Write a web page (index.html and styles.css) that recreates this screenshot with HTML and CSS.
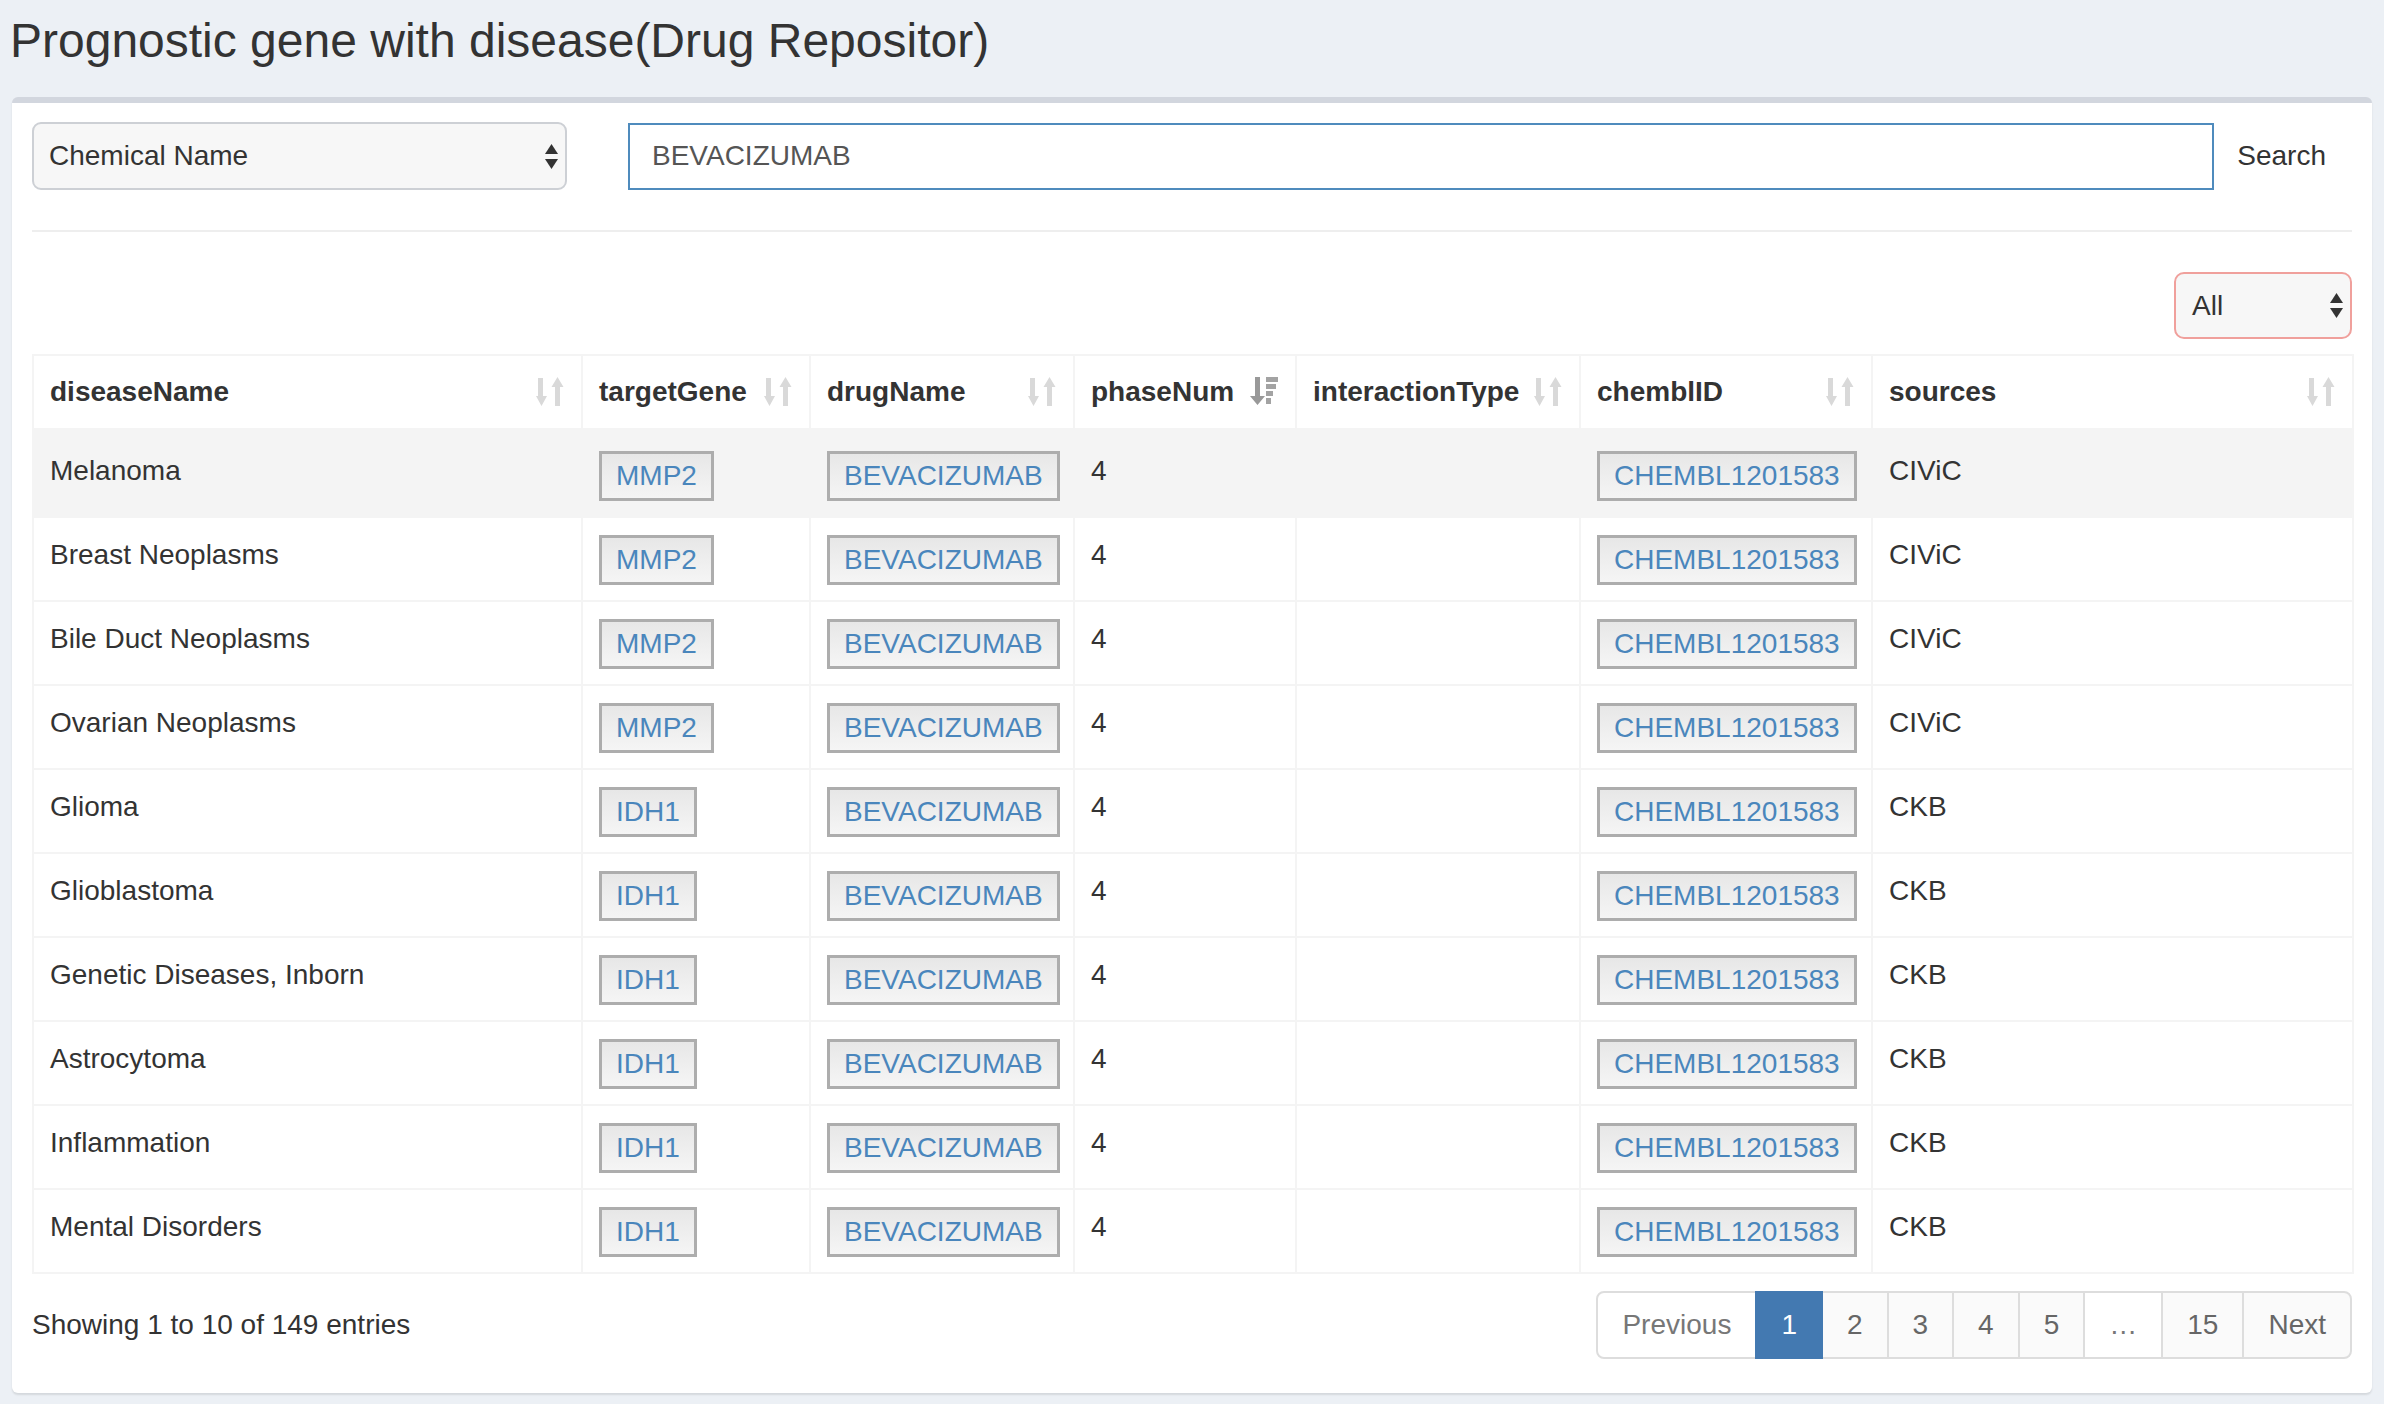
FILE: index.html
```html
<!DOCTYPE html>
<html lang="en">
<head>
<meta charset="utf-8">
<title>Prognostic gene with disease(Drug Repositor)</title>
<link rel="stylesheet" href="styles.css">
</head>
<body>
<h1 class="page-title">Prognostic gene with disease(Drug Repositor)</h1>
<section class="box">
  <div class="search-row">
    <div class="fake-select chem-select">
      <span>Chemical Name</span>
      <svg class="updown" viewBox="0 0 13 25" width="13" height="25"><polygon points="0,10 13,10 6.5,0"/><polygon points="0,15 13,15 6.5,25"/></svg>
    </div>
    <div class="search-input">BEVACIZUMAB</div>
    <div class="search-label">Search</div>
  </div>
  <hr class="divider">
  <div class="filter-row">
    <div class="fake-select all-select">
      <span>All</span>
      <svg class="updown" viewBox="0 0 13 25" width="13" height="25"><polygon points="0,10 13,10 6.5,0"/><polygon points="0,15 13,15 6.5,25"/></svg>
    </div>
  </div>
  <table class="data">
    <colgroup>
      <col class="c1"><col class="c2"><col class="c3"><col class="c4"><col class="c5"><col class="c6"><col class="c7">
    </colgroup>
    <thead>
      <tr>
        <th><div class="th"><span>diseaseName</span><svg class="sort" viewBox="0 0 28 30" width="28" height="30"><polygon points="2,1 7,1 7,19 11,19 5.5,29 0,19 2,19"/><polygon points="21.5,0 27.5,10 24,10 24,29 19,29 19,10 15.5,10"/></svg></div></th>
        <th><div class="th"><span>targetGene</span><svg class="sort" viewBox="0 0 28 30" width="28" height="30"><polygon points="2,1 7,1 7,19 11,19 5.5,29 0,19 2,19"/><polygon points="21.5,0 27.5,10 24,10 24,29 19,29 19,10 15.5,10"/></svg></div></th>
        <th><div class="th"><span>drugName</span><svg class="sort" viewBox="0 0 28 30" width="28" height="30"><polygon points="2,1 7,1 7,19 11,19 5.5,29 0,19 2,19"/><polygon points="21.5,0 27.5,10 24,10 24,29 19,29 19,10 15.5,10"/></svg></div></th>
        <th><div class="th"><span>phaseNum</span><svg class="sort active" viewBox="0 0 28 30" width="28" height="30"><polygon class="arr" points="5,0 10,0 10,19 15,19 7.5,28 0,19 5,19"/><rect class="bar" x="16" y="0" width="12" height="5"/><rect class="bar" x="16" y="7" width="10" height="5"/><rect class="bar" x="16" y="14" width="7" height="5"/><rect class="bar" x="16" y="21" width="5" height="6"/></svg></div></th>
        <th><div class="th"><span>interactionType</span><svg class="sort" viewBox="0 0 28 30" width="28" height="30"><polygon points="2,1 7,1 7,19 11,19 5.5,29 0,19 2,19"/><polygon points="21.5,0 27.5,10 24,10 24,29 19,29 19,10 15.5,10"/></svg></div></th>
        <th><div class="th"><span>chemblID</span><svg class="sort" viewBox="0 0 28 30" width="28" height="30"><polygon points="2,1 7,1 7,19 11,19 5.5,29 0,19 2,19"/><polygon points="21.5,0 27.5,10 24,10 24,29 19,29 19,10 15.5,10"/></svg></div></th>
        <th><div class="th"><span>sources</span><svg class="sort" viewBox="0 0 28 30" width="28" height="30"><polygon points="2,1 7,1 7,19 11,19 5.5,29 0,19 2,19"/><polygon points="21.5,0 27.5,10 24,10 24,29 19,29 19,10 15.5,10"/></svg></div></th>
      </tr>
    </thead>
    <tbody>
      <tr class="hl"><td>Melanoma</td><td><span class="lk">MMP2</span></td><td><span class="lk">BEVACIZUMAB</span></td><td>4</td><td></td><td><span class="lk">CHEMBL1201583</span></td><td>CIViC</td></tr>
      <tr><td>Breast Neoplasms</td><td><span class="lk">MMP2</span></td><td><span class="lk">BEVACIZUMAB</span></td><td>4</td><td></td><td><span class="lk">CHEMBL1201583</span></td><td>CIViC</td></tr>
      <tr><td>Bile Duct Neoplasms</td><td><span class="lk">MMP2</span></td><td><span class="lk">BEVACIZUMAB</span></td><td>4</td><td></td><td><span class="lk">CHEMBL1201583</span></td><td>CIViC</td></tr>
      <tr><td>Ovarian Neoplasms</td><td><span class="lk">MMP2</span></td><td><span class="lk">BEVACIZUMAB</span></td><td>4</td><td></td><td><span class="lk">CHEMBL1201583</span></td><td>CIViC</td></tr>
      <tr><td>Glioma</td><td><span class="lk">IDH1</span></td><td><span class="lk">BEVACIZUMAB</span></td><td>4</td><td></td><td><span class="lk">CHEMBL1201583</span></td><td>CKB</td></tr>
      <tr><td>Glioblastoma</td><td><span class="lk">IDH1</span></td><td><span class="lk">BEVACIZUMAB</span></td><td>4</td><td></td><td><span class="lk">CHEMBL1201583</span></td><td>CKB</td></tr>
      <tr><td>Genetic Diseases, Inborn</td><td><span class="lk">IDH1</span></td><td><span class="lk">BEVACIZUMAB</span></td><td>4</td><td></td><td><span class="lk">CHEMBL1201583</span></td><td>CKB</td></tr>
      <tr><td>Astrocytoma</td><td><span class="lk">IDH1</span></td><td><span class="lk">BEVACIZUMAB</span></td><td>4</td><td></td><td><span class="lk">CHEMBL1201583</span></td><td>CKB</td></tr>
      <tr><td>Inflammation</td><td><span class="lk">IDH1</span></td><td><span class="lk">BEVACIZUMAB</span></td><td>4</td><td></td><td><span class="lk">CHEMBL1201583</span></td><td>CKB</td></tr>
      <tr><td>Mental Disorders</td><td><span class="lk">IDH1</span></td><td><span class="lk">BEVACIZUMAB</span></td><td>4</td><td></td><td><span class="lk">CHEMBL1201583</span></td><td>CKB</td></tr>
    </tbody>
  </table>
  <div class="table-footer">
    <div class="info">Showing 1 to 10 of 149 entries</div>
    <ul class="pagination">
      <li class="disabled"><a>Previous</a></li>
      <li class="active"><a>1</a></li>
      <li><a>2</a></li>
      <li><a>3</a></li>
      <li><a>4</a></li>
      <li><a>5</a></li>
      <li class="disabled"><a>…</a></li>
      <li><a>15</a></li>
      <li><a>Next</a></li>
    </ul>
  </div>
</section>
</body>
</html>
```
FILE: styles.css
```css
* { box-sizing: border-box; }

html, body {
  margin: 0;
  padding: 0;
  background: #ecf0f5;
}

body {
  font-family: "Liberation Sans", Arial, Helvetica, sans-serif;
  font-size: 28px;
  line-height: 40px;
  color: #333;
  min-height: 1404px;
}

.page-title {
  margin: 0;
  padding: 14px 0 29px 10px;
  font-size: 48px;
  line-height: 54px;
  font-weight: 400;
  color: #333;
}

.box {
  margin: 0 12px;
  background: #fff;
  border-top: 6px solid #d2d6de;
  border-radius: 6px;
  box-shadow: 0 2px 2px rgba(0, 0, 0, 0.1);
  padding: 19px 20px 34px 20px;
}

.search-row {
  display: flex;
  align-items: center;
}

.fake-select {
  display: flex;
  align-items: center;
  justify-content: space-between;
  height: 68px;
  background: #f7f7f7;
  border: 2px solid #cdd0d5;
  border-radius: 9px;
  color: #333;
}

.fake-select .updown { fill: #333; }

.chem-select {
  width: 535px;
  padding: 0 7px 0 15px;
  margin-right: 61px;
}

.search-input {
  flex: 1;
  height: 67px;
  border: 2px solid #4f8bbd;
  padding: 0 22px;
  display: flex;
  align-items: center;
  color: #555;
}

.search-label {
  padding: 0 26px 0 23px;
  color: #333;
}

.divider {
  border: 0;
  border-top: 2px solid #eee;
  margin: 40px 0 40px 0;
  height: 0;
}

.filter-row {
  display: flex;
  justify-content: flex-end;
  margin-bottom: 15px;
}

.all-select {
  width: 178px;
  height: 67px;
  padding: 0 7px 0 16px;
  border-color: #f0a09c;
  border-radius: 10px;
}

.data {
  width: 2320px;
  table-layout: fixed;
  border-collapse: collapse;
}

.c1 { width: 549px; }
.c2 { width: 228px; }
.c3 { width: 264px; }
.c4 { width: 222px; }
.c5 { width: 284px; }
.c6 { width: 292px; }
.c7 { width: 481px; }

.data th,
.data td {
  border: 2px solid #f4f4f4;
  padding: 16px;
  text-align: left;
  vertical-align: top;
  line-height: 40px;
  white-space: nowrap;
}

.data td {
  padding-top: 17px;
  padding-bottom: 15px;
}

.data td .lk { margin-top: 0; }

.data tbody tr:first-child td {
  padding-top: 19px;
}

.data th {
  font-weight: 700;
  border-bottom-width: 4px;
  padding-right: 17px;
}

.th {
  display: flex;
  align-items: center;
  justify-content: space-between;
}

.sort { fill: #d9d9d9; flex: none; }
.sort.active .arr { fill: #999; }
.sort.active .bar { fill: #a3a3a3; }

.data tr.hl td { background: #f4f4f4; }

.lk {
  display: inline-block;
  vertical-align: top;
  padding: 6px 14px;
  border: 3px solid #adadad;
  line-height: 32px;
  color: #4a86bc;
  background: linear-gradient(#e7e7e7, #f5f5f5);
}

.table-footer {
  display: flex;
  align-items: center;
  justify-content: space-between;
  margin-top: 17px;
}

.info { color: #333; }

.pagination {
  display: flex;
  list-style: none;
  margin: 0;
  padding: 0;
}

.pagination li a {
  display: block;
  padding: 12px 24px;
  line-height: 40px;
  border: 2px solid #ddd;
  margin-left: -2px;
  background: #fafafa;
  color: #666;
}

.pagination li:first-child a {
  margin-left: 0;
  border-radius: 8px 0 0 8px;
}

.pagination li:last-child a {
  border-radius: 0 8px 8px 0;
}

.pagination li.disabled a {
  background: #fff;
  color: #777;
}

.pagination li.active a {
  background: #4379b1;
  border-color: #4379b1;
  color: #fff;
  position: relative;
  z-index: 1;
}
```
